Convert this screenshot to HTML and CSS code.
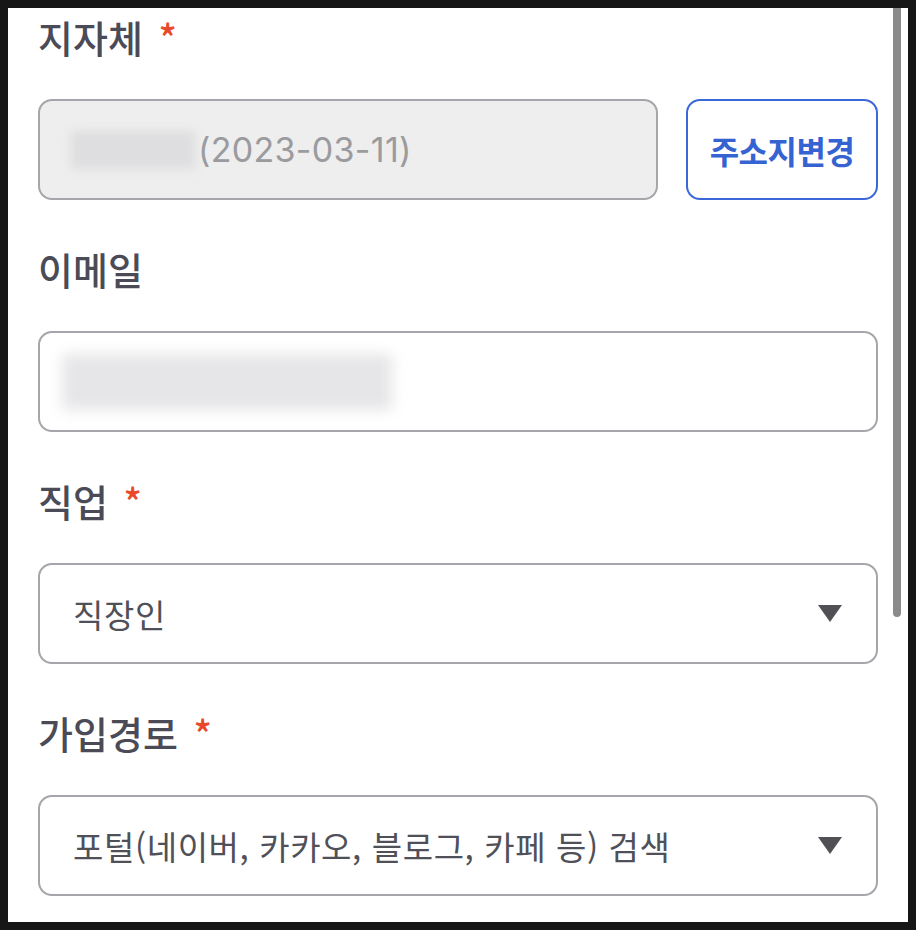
FILE: index.html
```html
<!DOCTYPE html>
<html lang="ko">
<head>
<meta charset="utf-8">
<link rel="stylesheet" href="styles.css">
</head>
<body>
<div class="screen">
  <div class="form">
    <div class="field">
      <div class="label">지자체 <span class="req">*</span></div>
      <div class="row">
        <div class="box box-disabled">
          <span class="blur blur-region"></span><span class="date">(2023-03-11)</span>
        </div>
        <div class="btn">주소지변경</div>
      </div>
    </div>
    <div class="field">
      <div class="label">이메일</div>
      <div class="box box-email">
        <span class="blur blur-email"></span>
      </div>
    </div>
    <div class="field">
      <div class="label">직업 <span class="req">*</span></div>
      <div class="box box-select">
        <span class="value">직장인</span>
        <span class="caret"></span>
      </div>
    </div>
    <div class="field">
      <div class="label">가입경로 <span class="req">*</span></div>
      <div class="box box-select">
        <span class="value">포털(네이버, 카카오, 블로그, 카페 등) 검색</span>
        <span class="caret"></span>
      </div>
    </div>
  </div>
  <div class="scrollbar"></div>
</div>
</body>
</html>
```
FILE: styles.css
```css
html, body {
  margin: 0;
  padding: 0;
  background: #161616;
}
body {
  font-family: "Noto Sans CJK KR", "Noto Sans", sans-serif;
}
.screen {
  position: relative;
  margin: 8px 0 0 8px;
  width: 900px;
  height: 914px;
  background: #ffffff;
  overflow: hidden;
}
.form {
  display: flex;
  flex-direction: column;
  gap: 44px;
  padding: 4px 30px 0 30px;
}
.field {
  display: flex;
  flex-direction: column;
  gap: 37px;
}
.label {
  font-size: 38px;
  line-height: 50px;
  font-weight: 500;
  color: #4b4b57;
}
.req {
  color: #e8492a;
  margin-left: 5px;
}
.row {
  display: flex;
  gap: 28px;
}
.box {
  box-sizing: border-box;
  height: 101px;
  border: 2px solid #a5a5aa;
  border-radius: 14px;
  display: flex;
  align-items: center;
  background: #ffffff;
}
.box-disabled {
  width: 620px;
  background: #eeeeee;
  padding-left: 31px;
}
.date {
  font-family: Inter, "Noto Sans CJK KR", sans-serif;
  font-size: 34px;
  color: #9b9b9f;
  letter-spacing: 0.3px;
}
.blur {
  display: inline-block;
  background: #dedee0;
  filter: blur(5px);
}
.blur-region {
  width: 124px;
  height: 38px;
  margin-right: 3px;
}
.box-email {
  width: 840px;
  padding-left: 22px;
}
.blur-email {
  width: 330px;
  height: 56px;
  background: #e6e6e8;
  filter: blur(7px);
}
.btn {
  box-sizing: border-box;
  width: 192px;
  height: 101px;
  border: 2px solid #3b68d8;
  border-radius: 14px;
  display: flex;
  align-items: center;
  justify-content: center;
  font-size: 32px;
  font-weight: 700;
  color: #3563d2;
  letter-spacing: -0.5px;
}
.box-select {
  width: 840px;
  padding: 0 33px 0 33px;
  justify-content: space-between;
}
.value {
  font-size: 33px;
  color: #505058;
  letter-spacing: 0.6px;
}
.caret {
  width: 0;
  height: 0;
  border-left: 12.5px solid transparent;
  border-right: 12.5px solid transparent;
  border-top: 17px solid #505055;
  margin-right: 1px;
}
.scrollbar {
  position: absolute;
  left: 885px;
  top: 0;
  width: 8px;
  height: 609px;
  background: #8a8a8a;
  border-radius: 0 0 4px 4px;
}
```
